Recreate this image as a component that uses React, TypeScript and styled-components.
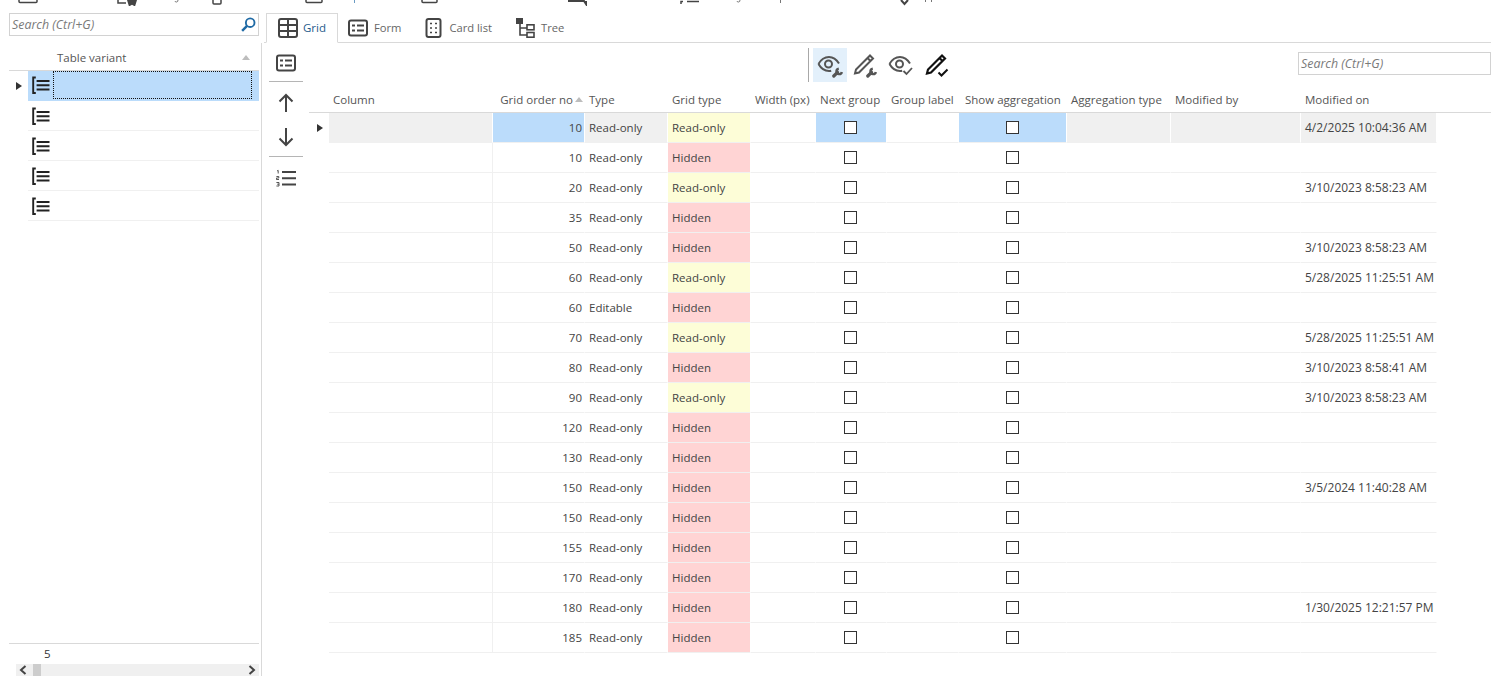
import styled, { createGlobalStyle } from 'styled-components';

const GlobalStyle = createGlobalStyle`
	html, body {
		margin: 0;
		padding: 0;
		height: 100%;
		background: #fff;
		overflow: hidden;
	}
	body {
		font-family: 'Open Sans', 'Noto Sans', sans-serif;
		font-size: 11.5px;
		color: #444;
	}
`;

const Page = styled.div`
	width: 1491px;
	height: 676px;
	display: flex;
	flex-direction: column;
	overflow: hidden;
`;
// обрезанная панель сверху
const TopStrip = styled.div`
	height: 13px;
	flex: none;
	svg {
		display: block;
	}
`;
const Main = styled.div`
	flex: 1;
	min-height: 0;
	display: flex;
`;

// левая панель
const LeftPanel = styled.div`
	width: 261px;
	flex: none;
	display: flex;
	flex-direction: column;
	padding: 0 2px 0 9px;
	box-sizing: border-box;
`;
const SearchBox = styled.div<{ $width?: number }>`
	height: 23px;
	width: ${(p) => (p.$width ? `${p.$width}px` : 'auto')};
	flex: none;
	box-sizing: border-box;
	border: 1px solid #d2d2d2;
	display: flex;
	align-items: center;
	justify-content: space-between;
	padding: 0 2px 0 2px;
	font-size: 12.4px;
	font-style: italic;
	color: #7a7a7a;
`;
const VariantHeader = styled.div`
	height: 35px;
	flex: none;
	box-sizing: border-box;
	border-bottom: 1px solid #d9d9d9;
	padding: 9px 9px 0 48px;
	display: flex;
	justify-content: space-between;
	align-items: center;
	color: #555;
`;
const SortArrow = styled.span<{ $color: string }>`
	width: 0;
	height: 0;
	flex: none;
	border-left: 4px solid transparent;
	border-right: 4px solid transparent;
	border-bottom: 5px solid ${(p) => p.$color};
`;
const VariantList = styled.div`
	flex: 1;
`;
const VariantRow = styled.div`
	height: 30px;
	display: flex;
	align-items: stretch;
`;
const RowMarker = styled.div<{ $width: number }>`
	width: ${(p) => p.$width}px;
	flex: none;
	display: flex;
	align-items: center;
	justify-content: center;
`;
const MarkerArrow = styled.span`
	width: 0;
	height: 0;
	border-top: 4.5px solid transparent;
	border-bottom: 4.5px solid transparent;
	border-left: 6px solid #333;
`;
const VariantCell = styled.div<{ $selected?: boolean }>`
	flex: 1;
	display: flex;
	align-items: center;
	padding: ${(p) => (p.$selected ? '0 7px 1px 4px' : '0 7px 0 4px')};
	background: ${(p) => (p.$selected ? '#bbdcfb' : '#fff')};
	border-bottom: 1px solid ${(p) => (p.$selected ? '#bbdcfb' : '#f0f0f0')};
	gap: 3px;
`;
const FocusBox = styled.div<{ $selected?: boolean }>`
	flex: 1;
	align-self: stretch;
	border: 1px dotted ${(p) => (p.$selected ? '#111' : 'transparent')};
`;
const VariantFooter = styled.div`
	height: 21px;
	flex: none;
	box-sizing: border-box;
	border-top: 1px solid #d9d9d9;
	padding: 0 0 2px 35px;
	display: flex;
	align-items: center;
	color: #333;
`;
const HScroll = styled.div`
	height: 12px;
	flex: none;
	margin-left: 7px;
	background: #f0f0f0;
	display: flex;
	align-items: center;
	justify-content: space-between;
	padding: 0 3px;
`;
const HThumb = styled.div`
	width: 8px;
	height: 12px;
	background: #cdcdcd;
	margin-left: 6px;
	margin-right: auto;
`;

// правая панель
const RightPanel = styled.div`
	flex: 1;
	min-width: 0;
	display: flex;
	flex-direction: column;
`;
const TabBar = styled.div`
	height: 30px;
	flex: none;
	margin-left: 3px;
	padding-left: 2px;
	box-sizing: border-box;
	border-bottom: 1px solid #d9d9d9;
	display: flex;
`;
const Tab = styled.div<{ $active?: boolean }>`
	height: 30px;
	box-sizing: border-box;
	display: flex;
	align-items: center;
	gap: ${(p) => (p.$active ? '5px' : '6px')};
	padding: ${(p) => (p.$active ? '0 11px 1px 11px' : '0 13px 1px 9px')};
	border: 1px solid ${(p) => (p.$active ? '#d9d9d9' : 'transparent')};
	border-bottom: 1px solid ${(p) => (p.$active ? '#fff' : 'transparent')};
	font-size: ${(p) => (p.$active ? '11.5px' : '11.2px')};
	color: ${(p) => (p.$active ? '#1f5c8c' : '#666')};
`;
const Body = styled.div`
	flex: 1;
	min-height: 0;
	display: flex;
	border-left: 1px solid #d9d9d9;
`;
const SideBar = styled.div`
	width: 47px;
	flex: none;
	box-sizing: border-box;
	padding: 10px 6px 0 7px;
	display: flex;
	flex-direction: column;
	align-items: center;
`;
const SideDivider = styled.div<{ $top: number; $bottom: number }>`
	width: 34px;
	height: 1px;
	flex: none;
	background: #b5b5b5;
	margin: ${(p) => p.$top}px 0 ${(p) => p.$bottom}px;
`;
const SideIcon = styled.div<{ $gap?: number }>`
	height: 20px;
	flex: none;
	margin-bottom: ${(p) => p.$gap || 0}px;
	svg {
		display: block;
	}
`;
const GridPane = styled.div`
	flex: 1;
	min-width: 0;
	display: flex;
	flex-direction: column;
`;
const Toolbar = styled.div`
	height: 45px;
	flex: none;
	box-sizing: border-box;
	padding: 5px 0 0 499px;
	display: flex;
	align-items: flex-start;
`;
const ToolDivider = styled.div`
	width: 1px;
	height: 34px;
	background: #a8a8a8;
	margin-right: 4px;
`;
const ToolButton = styled.div<{ $active?: boolean; $width: number }>`
	width: ${(p) => p.$width}px;
	height: 34px;
	display: flex;
	align-items: center;
	justify-content: center;
	background: ${(p) => (p.$active ? '#e3f0fb' : 'transparent')};
`;
const ToolSearch = styled.div`
	margin: 4px 0 0 auto;
`;

const COLS = '17px 164px 92px 83px 83px 65px 71px 72px 108px 104px 130px 136px';

const HeaderRow = styled.div`
	height: 25px;
	flex: none;
	box-sizing: border-box;
	padding: 0 0 2px 3px;
	display: grid;
	grid-template-columns: ${COLS};
	border-bottom: 1px solid #d9d9d9;
	color: #555;
`;
const HeadCell = styled.div<{ $pad?: number; $right?: boolean }>`
	display: flex;
	align-items: center;
	justify-content: ${(p) => (p.$right ? 'flex-end' : 'flex-start')};
	gap: 2px;
	padding: 0 2px 0 ${(p) => p.$pad ?? 4}px;
	white-space: nowrap;
`;
const DataRow = styled.div`
	height: 30px;
	flex: none;
	padding-left: 3px;
	display: grid;
	grid-template-columns: ${COLS};
`;
type Tone = 'plain' | 'grey' | 'blue' | 'yellow' | 'pink';
const TONES: Record<Tone, string> = {
	plain: '#fff',
	grey: '#f0f0f0',
	blue: '#bbdcfb',
	yellow: '#fdfdd7',
	pink: '#ffd4d4',
};
const Cell = styled.div<{ $tone?: Tone; $right?: boolean; $center?: boolean; $line?: boolean; $size?: number }>`
	box-sizing: border-box;
	display: flex;
	align-items: center;
	justify-content: ${(p) => (p.$right ? 'flex-end' : p.$center ? 'center' : 'flex-start')};
	padding: 0 ${(p) => (p.$right ? '2px' : p.$center ? '1px' : '0')} 0 ${(p) => (p.$center || p.$right ? '0' : '4px')};
	background: ${(p) => TONES[p.$tone || 'plain']};
	background-clip: padding-box;
	border-right: 1px solid ${(p) => (p.$line ? '#f0f0f0' : '#fff')};
	border-bottom: 1px solid #f0f0f0;
	font-size: ${(p) => p.$size || 11.5}px;
	white-space: nowrap;
	color: #444;
`;
const Marker = styled.div`
	display: flex;
	align-items: center;
	justify-content: center;
	padding-right: 1px;
`;
const Check = styled.span`
	width: 13px;
	height: 13px;
	box-sizing: border-box;
	border: 1px solid #333;
	background: #fff;
`;

const Ic = { fill: 'none', stroke: '#444', strokeWidth: 2 };

const GridIcon = () => (
	<svg width="20" height="20" viewBox="0 0 20 20" {...Ic}>
		<rect x="1" y="1" width="18" height="18" rx="2" />
		<path d="M1 7h18M1 13h18M10 1v18" />
	</svg>
);
const FormIcon = () => (
	<svg width="20" height="20" viewBox="0 0 20 20" {...Ic}>
		<rect x="1" y="2.5" width="18" height="15" rx="2" />
		<path d="M4 7.500h3M9 7.500h7M4 12.500h3M9 12.500h7" />
	</svg>
);
const CardIcon = () => (
	<svg width="18" height="20" viewBox="0 0 18 20" {...Ic}>
		<rect x="1.500" y="1" width="14" height="18" rx="2" />
		<path d="M5 5.500h2M10 5.500h2M5 10h2M10 10h2M5 14.500h2M10 14.500h2" strokeWidth="1.600" />
	</svg>
);
const TreeIcon = () => (
	<svg width="19" height="20" viewBox="0 0 19 20" fill="none" stroke="#444" strokeWidth="1.600">
		<rect x="0" y="0" width="7" height="6" fill="#444" stroke="none" />
		<path d="M4 6v11h7M4 10h7" />
		<rect x="11" y="6.800" width="7" height="5" />
		<rect x="11" y="14.500" width="7" height="4.700" />
	</svg>
);
const UpIcon = () => (
	<svg width="20" height="20" viewBox="0 0 20 20" fill="none" stroke="#444" strokeWidth="2">
		<path d="M10 19V2M3.500 8.500L10 2l6.500 6.500" />
	</svg>
);
const DownIcon = () => (
	<svg width="20" height="20" viewBox="0 0 20 20" fill="none" stroke="#444" strokeWidth="2">
		<path d="M10 1v17M3.500 11.500L10 18l6.500-6.500" />
	</svg>
);
const OrderIcon = () => (
	<svg width="20" height="20" viewBox="0 0 20 20" fill="none" stroke="#444" strokeWidth="2">
		<path d="M6 3h14M6 9.300h14M6 15.500h14" />
		<path d="M1 2l1.200-.6V4.500M.4 7.500h2.400v1.500H.4v1.500h2.600M.4 13.500h2.600v3.500H.4M1.200 15.200H3" strokeWidth=".9" />
	</svg>
);
const VariantIcon = () => (
	<svg width="18" height="20" viewBox="0 0 18 20" fill="none" stroke="#222">
		<path d="M3.800 2.500H1.200v15.500h2.600" strokeWidth="1.900" />
		<path d="M4.600 6h12.900M4.600 10.300h12.900M4.600 14.600h12.900" strokeWidth="2" />
	</svg>
);
const SearchGlass = ({ size }: { size: number }) => (
	<svg width={size} height={size} viewBox="0 0 16 16" fill="none" stroke="#1f6aa5" strokeWidth="2">
		<circle cx="9.800" cy="6" r="4.600" />
		<path d="M6.400 9.400L1.200 14.800" strokeWidth="2.600" />
	</svg>
);
const Chevron = ({ dir }: { dir: 'left' | 'right' }) => (
	<svg width="8" height="10" viewBox="0 0 8 10" fill="none" stroke="#444" strokeWidth="2">
		<path d={dir === 'left' ? 'M6.500 1L2 5l4.500 4' : 'M1.500 1L6 5 1.500 9'} />
	</svg>
);

const EYE = 'M1.500 12C4 7.500 8 5 12 5s7.500 2.500 10 6.500';
const EYE_LOW = 'M1.500 12c2.500 4.500 6.500 7 10.500 7 .8 0 1.500-.1 2.200-.3';

const Wrench = ({ dx = 0 }: { dx?: number }) => (
	<g fill="none" stroke="#555" transform={`translate(${dx} 0)`}>
		<path d="M16.800 24L20.500 20.300" strokeWidth="3.200" strokeLinecap="round" />
		<path d="M21.800 16.700a2.700 2.700 0 1 0 3 3.200" strokeWidth="2.400" />
	</g>
);
const EyeWrench = () => (
	<svg width="26" height="26" viewBox="0 0 26 26" fill="none" stroke="#555" strokeWidth="2">
		<path d={EYE} />
		<path d={EYE_LOW} />
		<circle cx="11.500" cy="12" r="3.500" />
		<Wrench />
	</svg>
);
const PencilWrench = () => (
	<svg width="26" height="26" viewBox="0 0 26 26" fill="none" stroke="#555" strokeWidth="2">
		<path d="M18 3.500l3 3L7 20.500l-4 1 1-4zM15.500 6l3 3" />
		<Wrench dx={-1} />
	</svg>
);
const EyeCheck = () => (
	<svg width="26" height="26" viewBox="0 0 26 26" fill="none" stroke="#555" strokeWidth="2">
		<path d={EYE} />
		<path d={EYE_LOW} />
		<circle cx="11.500" cy="12" r="3.500" />
		<path d="M15.500 19l3 3 5.500-6" strokeWidth="1.800" />
	</svg>
);
const PencilCheck = () => (
	<svg width="26" height="26" viewBox="0 0 26 26" fill="none" stroke="#111" strokeWidth="2.200">
		<path d="M18 3.500l3 3L7 20.500l-4 1 1-4zM15.500 6l3 3" />
		<path d="M14.500 20.500l3 3 6-6" strokeWidth="2" />
	</svg>
);

// куски иконок верхней панели, видны только нижние края
const CutToolbar = () => (
	<svg width="1491" height="6" viewBox="0 0 1491 6" fill="none" stroke="#444" strokeWidth="1.500">
		<path d="M19 0v1.500q0 1 1 1h16q1 0 1-1V0" />
		<path d="M118 0v3h8" />
		<path d="M127 0l5 0 5 0-2 6.500-3-1.800-3 1.800z" fill="#444" stroke="none" />
		<path d="M175 1q0 1 1.500 1 1.500 0 1.500-2" strokeWidth="1" stroke="#777" />
		<path d="M213 0v3q0 1 1 1h6q1 0 1-1V0" />
		<path d="M306 0v1.500q0 1 1 1h14q1 0 1-1V0" />
		<path d="M354.500 0v3" stroke="#6a9bc3" strokeWidth="1" />
		<path d="M422 0v1.500q0 1 1 1h13q1 0 1-1V0" />
		<path d="M568 1h16l2 3V1" strokeWidth="2" />
		<path d="M681 4V1.500h2M687 1.500h12" />
		<path d="M737 1q0 1 1.500 1 1.500 0 1.500-2" strokeWidth="1" stroke="#777" />
		<path d="M780.500 0v3" strokeWidth="1" stroke="#777" />
		<path d="M901 0l3.500 4 3.500-4" strokeWidth="2" />
		<path d="M925.500 0v2M931.500 0v2" strokeWidth="1" stroke="#777" />
	</svg>
);

type Row = { order: number; type?: string; grid: 'Read-only' | 'Hidden'; date?: string };
const rows: Row[] = [
	{ order: 10, grid: 'Read-only', date: '4/2/2025 10:04:36 AM' },
	{ order: 10, grid: 'Hidden' },
	{ order: 20, grid: 'Read-only', date: '3/10/2023 8:58:23 AM' },
	{ order: 35, grid: 'Hidden' },
	{ order: 50, grid: 'Hidden', date: '3/10/2023 8:58:23 AM' },
	{ order: 60, grid: 'Read-only', date: '5/28/2025 11:25:51 AM' },
	{ order: 60, type: 'Editable', grid: 'Hidden' },
	{ order: 70, grid: 'Read-only', date: '5/28/2025 11:25:51 AM' },
	{ order: 80, grid: 'Hidden', date: '3/10/2023 8:58:41 AM' },
	{ order: 90, grid: 'Read-only', date: '3/10/2023 8:58:23 AM' },
	{ order: 120, grid: 'Hidden' },
	{ order: 130, grid: 'Hidden' },
	{ order: 150, grid: 'Hidden', date: '3/5/2024 11:40:28 AM' },
	{ order: 150, grid: 'Hidden' },
	{ order: 155, grid: 'Hidden' },
	{ order: 170, grid: 'Hidden' },
	{ order: 180, grid: 'Hidden', date: '1/30/2025 12:21:57 PM' },
	{ order: 185, grid: 'Hidden' },
];

export default function App() {
	return (
		<Page>
			<GlobalStyle />
			<TopStrip>
				<CutToolbar />
			</TopStrip>
			<Main>
				<LeftPanel>
					<SearchBox>
						<span>Search (Ctrl+G)</span>
						<SearchGlass size={15} />
					</SearchBox>
					<VariantHeader>
						<span>Table variant</span>
						<SortArrow $color="#bdbdbd" />
					</VariantHeader>
					<VariantList>
						{[0, 1, 2, 3, 4].map((i) => (
							<VariantRow key={i}>
								<RowMarker $width={19}>{i === 0 && <MarkerArrow />}</RowMarker>
								<VariantCell $selected={i === 0}>
									<VariantIcon />
									<FocusBox $selected={i === 0} />
								</VariantCell>
							</VariantRow>
						))}
					</VariantList>
					<VariantFooter>5</VariantFooter>
					<HScroll>
						<Chevron dir="left" />
						<HThumb />
						<Chevron dir="right" />
					</HScroll>
				</LeftPanel>
				<RightPanel>
					<TabBar>
						<Tab $active>
							<GridIcon />
							Grid
						</Tab>
						<Tab>
							<FormIcon />
							Form
						</Tab>
						<Tab>
							<CardIcon />
							Card list
						</Tab>
						<Tab>
							<TreeIcon />
							Tree
						</Tab>
					</TabBar>
					<Body>
						<SideBar>
							<SideIcon>
								<FormIcon />
							</SideIcon>
							<SideDivider $top={8} $bottom={11} />
							<SideIcon $gap={14}>
								<UpIcon />
							</SideIcon>
							<SideIcon>
								<DownIcon />
							</SideIcon>
							<SideDivider $top={9} $bottom={12} />
							<SideIcon>
								<OrderIcon />
							</SideIcon>
						</SideBar>
						<GridPane>
							<Toolbar>
								<ToolDivider />
								<ToolButton $active $width={34}>
									<EyeWrench />
								</ToolButton>
								<ToolButton $width={36}>
									<PencilWrench />
								</ToolButton>
								<ToolButton $width={35}>
									<EyeCheck />
								</ToolButton>
								<ToolButton $width={38}>
									<PencilCheck />
								</ToolButton>
								<ToolSearch>
									<SearchBox $width={193}>
										<span>Search (Ctrl+G)</span>
									</SearchBox>
								</ToolSearch>
							</Toolbar>
							<HeaderRow>
								<HeadCell />
								<HeadCell>Column</HeadCell>
								<HeadCell $right>
									Grid order no
									<SortArrow $color="#bdbdbd" />
								</HeadCell>
								<HeadCell>Type</HeadCell>
								<HeadCell>Grid type</HeadCell>
								<HeadCell>Width (px)</HeadCell>
								<HeadCell>Next group</HeadCell>
								<HeadCell>Group label</HeadCell>
								<HeadCell $pad={6}>Show aggregation</HeadCell>
								<HeadCell>Aggregation type</HeadCell>
								<HeadCell>Modified by</HeadCell>
								<HeadCell>Modified on</HeadCell>
							</HeaderRow>
							{rows.map((r, i) => {
								const sel = i === 0;
								return (
									<DataRow key={i}>
										<Marker>{sel && <MarkerArrow />}</Marker>
										<Cell $tone={sel ? 'grey' : 'plain'} $line={!sel} />
										<Cell $tone={sel ? 'blue' : 'plain'} $right>
											{r.order}
										</Cell>
										<Cell $tone={sel ? 'grey' : 'plain'}>{r.type || 'Read-only'}</Cell>
										<Cell $tone={r.grid === 'Hidden' ? 'pink' : 'yellow'}>{r.grid}</Cell>
										<Cell />
										<Cell $tone={sel ? 'blue' : 'plain'} $center>
											<Check />
										</Cell>
										<Cell />
										<Cell $tone={sel ? 'blue' : 'plain'} $center>
											<Check />
										</Cell>
										<Cell $tone={sel ? 'grey' : 'plain'} />
										<Cell $tone={sel ? 'grey' : 'plain'} />
										<Cell $tone={sel ? 'grey' : 'plain'} $size={12}>
											{r.date}
										</Cell>
									</DataRow>
								);
							})}
						</GridPane>
					</Body>
				</RightPanel>
			</Main>
		</Page>
	);
}
